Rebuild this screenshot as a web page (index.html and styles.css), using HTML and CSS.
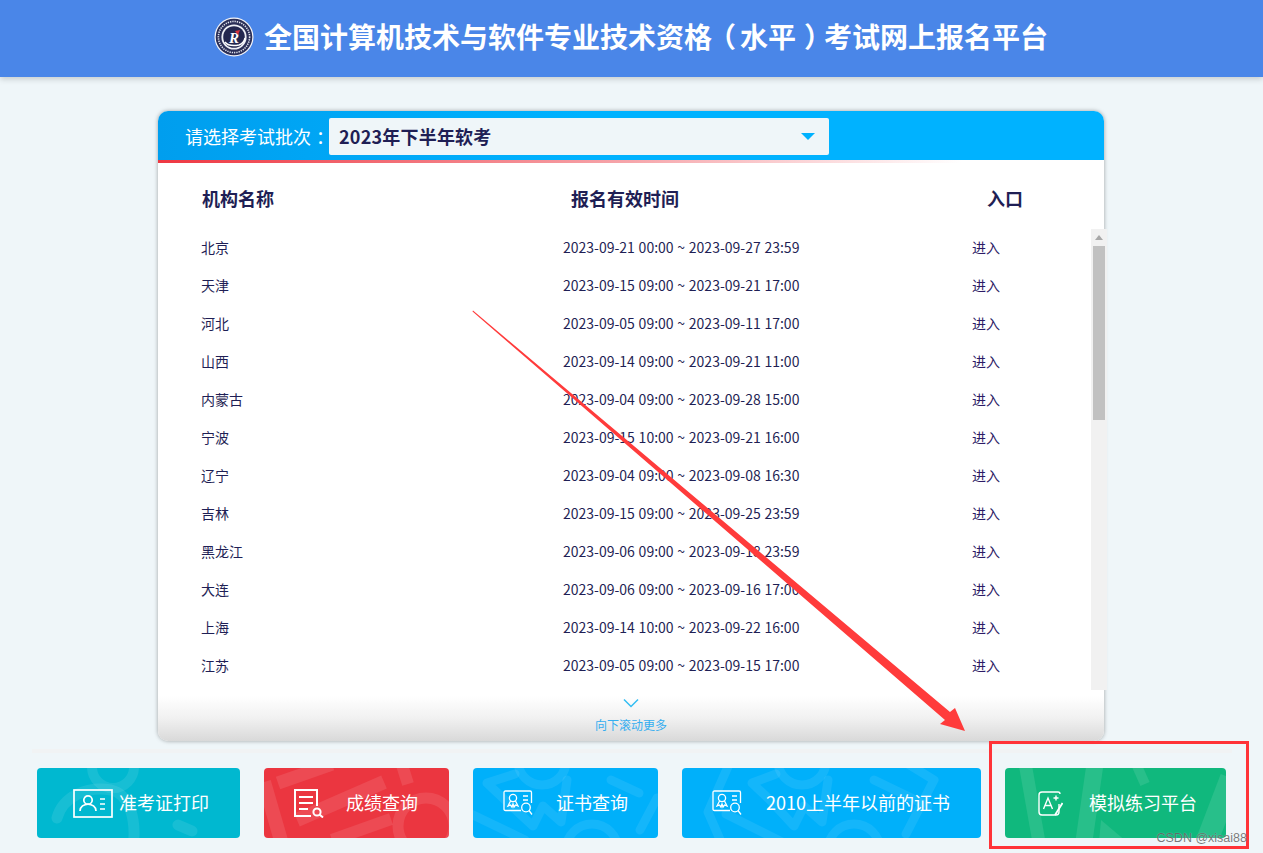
FILE: index.html
```html
<!DOCTYPE html>
<html lang="zh-CN">
<head>
<meta charset="utf-8">
<title>全国计算机技术与软件专业技术资格（水平）考试网上报名平台</title>
<link rel="stylesheet" href="styles.css">
</head>
<body>
<header class="topbar">
  <svg class="logo" viewBox="0 0 40 40" aria-hidden="true">
    <circle cx="20" cy="20" r="19.5" fill="#f4f5f9"/>
    <circle cx="20" cy="20" r="18.3" fill="#2b2f57"/>
    <circle cx="20" cy="20" r="15.6" fill="none" stroke="#dfe2ec" stroke-width="1.6" stroke-dasharray="1.3 1"/>
    <circle cx="20" cy="20" r="12.6" fill="#eef0f6"/>
    <circle cx="20" cy="20" r="10.8" fill="#23274f"/>
    <path d="M11 25 q4 5 14 3 q5 -2 6 -7" fill="none" stroke="#fff" stroke-width="1.4"/>
    <text x="20" y="26" class="logo-r">R</text>
    <path d="M21 14 l5 -1 l-2 5 z" fill="#d6323c"/>
  </svg>
  <h1 class="title">全国计算机技术与软件专业技术资格<span class="paren-l">（</span>水平<span class="paren-r">）</span>考试网上报名平台</h1>
</header>

<main class="panel">
  <div class="panel-head">
    <span class="batch-label">请选择考试批次<span class="colon">：</span></span>
    <div class="batch-select">
      <span>2023年下半年软考</span>
      <i class="caret"></i>
    </div>
  </div>
  <div class="red-line"></div>
  <div class="cols">
    <span class="col-name">机构名称</span>
    <span class="col-time">报名有效时间</span>
    <span class="col-entry">入口</span>
  </div>
  <div class="list">
    <div class="row"><span>北京</span><span>2023-09-21 00:00 ~ 2023-09-27 23:59</span><span class="enter">进入</span></div>
    <div class="row"><span>天津</span><span>2023-09-15 09:00 ~ 2023-09-21 17:00</span><span class="enter">进入</span></div>
    <div class="row"><span>河北</span><span>2023-09-05 09:00 ~ 2023-09-11 17:00</span><span class="enter">进入</span></div>
    <div class="row"><span>山西</span><span>2023-09-14 09:00 ~ 2023-09-21 11:00</span><span class="enter">进入</span></div>
    <div class="row"><span>内蒙古</span><span>2023-09-04 09:00 ~ 2023-09-28 15:00</span><span class="enter">进入</span></div>
    <div class="row"><span>宁波</span><span>2023-09-15 10:00 ~ 2023-09-21 16:00</span><span class="enter">进入</span></div>
    <div class="row"><span>辽宁</span><span>2023-09-04 09:00 ~ 2023-09-08 16:30</span><span class="enter">进入</span></div>
    <div class="row"><span>吉林</span><span>2023-09-15 09:00 ~ 2023-09-25 23:59</span><span class="enter">进入</span></div>
    <div class="row"><span>黑龙江</span><span>2023-09-06 09:00 ~ 2023-09-18 23:59</span><span class="enter">进入</span></div>
    <div class="row"><span>大连</span><span>2023-09-06 09:00 ~ 2023-09-16 17:00</span><span class="enter">进入</span></div>
    <div class="row"><span>上海</span><span>2023-09-14 10:00 ~ 2023-09-22 16:00</span><span class="enter">进入</span></div>
    <div class="row"><span>江苏</span><span>2023-09-05 09:00 ~ 2023-09-15 17:00</span><span class="enter">进入</span></div>
  </div>
  <div class="scrollbar"><i class="scroll-up"></i><i class="scroll-thumb"></i></div>
  <div class="more">
    <svg class="more-icon" viewBox="0 0 16 10" aria-hidden="true"><path d="M1 1.5 L8 8.5 L15 1.5" fill="none" stroke="#33bdf2" stroke-width="1.5"/></svg>
    <span>向下滚动更多</span>
  </div>
</main>

<nav class="actions">
  <a class="btn btn-ticket">
    <svg class="deco" viewBox="0 0 203 70" aria-hidden="true"><g fill="none" stroke="#fff" stroke-opacity=".09" stroke-linecap="round"><circle cx="76" cy="-1" r="21" stroke-width="10"/><path d="M20 50 C26 28 50 18 74 22 C92 26 100 50 96 80" stroke-width="11"/><path d="M141 57 L155 63" stroke-width="11"/></g></svg>
    <svg class="ico ico-card" viewBox="0 0 40 29" aria-hidden="true"><g fill="none" stroke="#fff" stroke-width="1.7"><rect x="1" y="1" width="38" height="27"/><circle cx="15" cy="11" r="4.2"/><path d="M7 22 C7 13 23 13 23 22"/><path d="M27 10 h5 M27 15 h5 M27 20 h5"/></g></svg>
    <span>准考证打印</span>
  </a>
  <a class="btn btn-score">
    <svg class="deco" viewBox="0 0 185 70" aria-hidden="true"><g fill="none" stroke="#fff" stroke-opacity=".1"><path d="M14 15 L68 -4" stroke-width="13"/><path d="M33 52 L120 14" stroke-width="14"/><path d="M68 72 L127 51" stroke-width="12"/><path d="M0 14 L18 76" stroke-width="14"/><path d="M138 -3 L144 16" stroke-width="12"/><circle cx="162" cy="58" r="28" stroke-width="11"/></g></svg>
    <svg class="ico ico-doc" viewBox="0 0 30 29" aria-hidden="true"><g fill="none" stroke="#fff" stroke-width="2"><path d="M23 17 V1 H1 V27 H17"/><path d="M5 8 h14 M5 14 h14 M5 20 h9"/><circle cx="23" cy="23" r="3.6"/><path d="M25.5 25.5 L29 28.5"/></g></svg>
    <span>成绩查询</span>
  </a>
  <a class="btn btn-cert">
    <svg class="deco" viewBox="0 0 185 70" aria-hidden="true"><g fill="none" stroke="#fff" stroke-opacity=".08" stroke-width="9" stroke-linejoin="round" stroke-linecap="round"><circle cx="69" cy="-7" r="24"/><path d="M42 6 L14 15 L32 32 L60 58 L70 38 L88 54 L94 12"/><path d="M138 12 L166 25"/><path d="M-6 44 L52 72"/><circle cx="119" cy="82" r="26"/><path d="M167 62 L184 30"/></g></svg>
    <svg class="ico ico-cert" viewBox="0 0 30 26" aria-hidden="true"><use href="#cert-shape"/></svg>
    <span>证书查询</span>
  </a>
  <a class="btn btn-old">
    <svg class="deco" viewBox="0 0 299 70" aria-hidden="true"><g fill="none" stroke="#fff" stroke-opacity=".08" stroke-width="9" stroke-linejoin="round" stroke-linecap="round"><circle cx="120" cy="-7" r="24"/><path d="M94 6 L70 15 L88 32 L112 58 L122 38 L140 54 L146 12"/><path d="M192 12 L246 38"/><path d="M48 -6 L26 44 L40 76"/><path d="M44 46 L108 78"/><circle cx="172" cy="82" r="26"/><path d="M226 -4 L252 12 L224 66"/></g></svg>
    <svg class="ico ico-cert" viewBox="0 0 30 26" aria-hidden="true">
      <g id="cert-shape" fill="none" stroke="#fff" stroke-width="1.3">
        <path d="M18 20.5 H2.5 Q1 20.5 1 19 V2.5 Q1 1 2.5 1 H27 Q28.5 1 28.5 2.5 V13"/>
        <circle cx="10" cy="8" r="3.6"/>
        <path d="M7.5 11 L5 16 L7.5 15 L9 17 L10 14 L11 17 L12.5 15 L15 16 L12.5 11"/>
        <path d="M20 6 h5 M20 10 h5"/>
        <circle cx="23" cy="17.5" r="4.3"/>
        <path d="M26 20.5 L29 24.5"/>
      </g>
    </svg>
    <span>2010上半年以前的证书</span>
  </a>
  <a class="btn btn-mock">
    <svg class="deco" viewBox="0 0 221 70" aria-hidden="true"><g fill="none" stroke="#fff" stroke-opacity=".1"><path d="M20 -5 L35 80" stroke-width="13"/><path d="M90 -4 L78 80" stroke-width="17"/><path d="M96 52 L122 74 L94 74 Z" fill="#fff" fill-opacity=".1" stroke="none"/><path d="M132 -2 L140 16" stroke-width="10"/><path d="M226 10 L200 78" stroke-width="22"/></g></svg>
    <svg class="ico ico-aplus" viewBox="0 0 25 25" aria-hidden="true"><g fill="none" stroke="#fff" stroke-width="1.4"><path d="M21 13 V21 Q21 24 18 24 H4 Q1 24 1 21 V4 Q1 1 4 1 H20 Q22 1 22 3"/><path d="M5.5 18 L10 7 L14.5 18 M7 14.5 H13"/><path d="M15.5 7 h5 M18 4.5 v5"/><path d="M17 24 L24.5 12" stroke-width="1.8"/></g></svg>
    <span>模拟练习平台</span>
  </a>
</nav>

<svg class="markup" viewBox="0 0 1263 853" aria-hidden="true">
  <polygon points="473,310.5 950,712 955,708 965,731 940,724 945,720 472.5,311.5" fill="#ff3b3b"/>
</svg>
<div class="markup-box"></div>
<div class="watermark">CSDN @xisai88</div>
</body>
</html>
```

FILE: styles.css
```css
* { box-sizing: border-box; }

html, body {
  margin: 0;
  height: 853px;
  overflow: hidden;
}

body {
  position: relative;
  background: #eff6f9;
  font-family: "Noto Sans CJK SC", "Noto Sans", sans-serif;
  color: #1f1f55;
}

.paren-l, .paren-r, .colon { font-feature-settings: "halt"; }
.paren-l { padding: 0 4px 0 10px; }
.paren-r { padding: 0 6px 0 8px; }
.colon   { padding: 0 4px 0 5px; }

.topbar {
  height: 77px;
  background: #4a86e8;
  box-shadow: 0 2px 6px rgba(0, 0, 0, .18);
  display: flex;
  align-items: center;
  padding: 0 0 3px 214px;
  gap: 10px;
}

.logo { width: 40px; height: 40px; flex: none; }

.logo-r {
  font-family: "Liberation Serif", serif;
  font-size: 15px;
  font-style: italic;
  font-weight: 700;
  fill: #fff;
  text-anchor: middle;
}

.title {
  margin: 0 0 2px;
  font-size: 28px;
  line-height: 40px;
  font-weight: 700;
  color: #fff;
  white-space: nowrap;
}

.panel {
  position: relative;
  width: 946px;
  height: 630px;
  margin: 34px 0 0 158px;
  background: #fff;
  border-radius: 10px;
  box-shadow: 0 0 4px rgba(0, 0, 0, .35);
}

.panel-head {
  height: 49px;
  padding: 7px 0 5px 27px;
  display: flex;
  align-items: center;
  background: linear-gradient(90deg, #009eee 0, #00b2ff 45%, #00b2ff 100%);
  border-radius: 10px 10px 0 0;
}

.batch-label {
  width: 144px;
  margin-bottom: 2px;
  font-size: 18px;
  line-height: 26px;
  color: #fff;
  white-space: nowrap;
}

.batch-select {
  width: 500px;
  height: 37px;
  padding: 0 14px 2px 10px;
  display: flex;
  align-items: center;
  justify-content: space-between;
  background: #eff6f9;
  border-radius: 2px;
  font-size: 18px;
  font-weight: 700;
  color: #1f1f55;
  letter-spacing: .2px;
}

.caret {
  width: 0;
  height: 0;
  margin-top: 2px;
  border-left: 7px solid transparent;
  border-right: 7px solid transparent;
  border-top: 7px solid #00b2ff;
}

.red-line {
  height: 3px;
  background: linear-gradient(90deg, #ee3742 0, #f6a6ab 50%, #ffffff 85%);
}

.cols {
  height: 66px;
  padding: 4px 0 0 44px;
  display: grid;
  grid-template-columns: 369px 416px 1fr;
  align-items: center;
  font-size: 18px;
  font-weight: 700;
}

.list {
  height: 461px;
  overflow: hidden;
}

.row {
  height: 38px;
  padding: 0 0 3px 43px;
  display: grid;
  grid-template-columns: 362px 409px 1fr;
  align-items: center;
  font-size: 14px;
  word-spacing: .6px;
  white-space: nowrap;
}

.enter { color: #2c1a66; }

.scrollbar {
  position: absolute;
  top: 118px;
  right: -3px;
  width: 16px;
  height: 461px;
  background: #f1f1f1;
  padding: 0 2px;
}

.scroll-up {
  display: block;
  width: 0;
  height: 0;
  margin: 6px auto 6px;
  border-left: 4px solid transparent;
  border-right: 4px solid transparent;
  border-bottom: 5px solid #a8a8a8;
}

.scroll-thumb {
  display: block;
  height: 174px;
  background: #c1c1c1;
}

.more {
  height: 51px;
  padding-top: 8px;
  display: flex;
  flex-direction: column;
  align-items: center;
  background: linear-gradient(180deg, #fff 0, #fff 12%, #f1f1f1 55%, #d9d9d9 100%);
  border-radius: 0 0 10px 10px;
  font-size: 12px;
  line-height: 16px;
  color: #35aef0;
}

.more-icon { width: 16px; height: 10px; margin-bottom: 9px; flex: none; }

.actions {
  width: 1200px;
  margin: 8px 0 0 32px;
  padding: 15px 0 0 5px;
  border-top: 4px solid #f1f3f4;
  display: flex;
  gap: 24px;
}

.btn {
  position: relative;
  height: 70px;
  display: flex;
  align-items: center;
  border-radius: 4px;
  overflow: hidden;
  color: #fff;
  font-size: 18px;
  white-space: nowrap;
}

.btn > span, .btn > .ico { position: relative; }
.btn > span { padding-bottom: 2px; }

.deco {
  position: absolute;
  inset: 0;
  width: 100%;
  height: 100%;
}

.ico { flex: none; }

.btn-ticket { width: 203px; padding-left: 36px; gap: 6px; background: #00b8d0; }
.btn-score  { width: 185px; padding-left: 30px; gap: 22px; background: #eb3640; }
.btn-cert   { width: 185px; padding-left: 30px; gap: 23px; background: #00b0fa; }
.btn-old    { width: 299px; padding-left: 30px; gap: 24px; background: #00b0fa; }
.btn-mock   { width: 221px; padding-left: 33px; gap: 26px; background: #10b87d; }

.ico-card  { width: 40px; height: 29px; }
.ico-doc   { width: 30px; height: 29px; }
.ico-cert  { width: 30px; height: 26px; }
.ico-aplus { width: 25px; height: 25px; }

.markup {
  position: absolute;
  left: 0;
  top: 0;
  width: 1263px;
  height: 853px;
  pointer-events: none;
}

.markup-box {
  position: absolute;
  left: 989px;
  top: 741px;
  width: 260px;
  height: 108px;
  border: 3px solid #ff3338;
}

.watermark {
  position: absolute;
  right: 16px;
  top: 829px;
  font-family: "Liberation Sans", sans-serif;
  font-size: 12.5px;
  line-height: 18px;
  color: rgba(70, 70, 70, .72);
  text-shadow: 0 0 1px rgba(255, 255, 255, .6);
  white-space: nowrap;
}
```
